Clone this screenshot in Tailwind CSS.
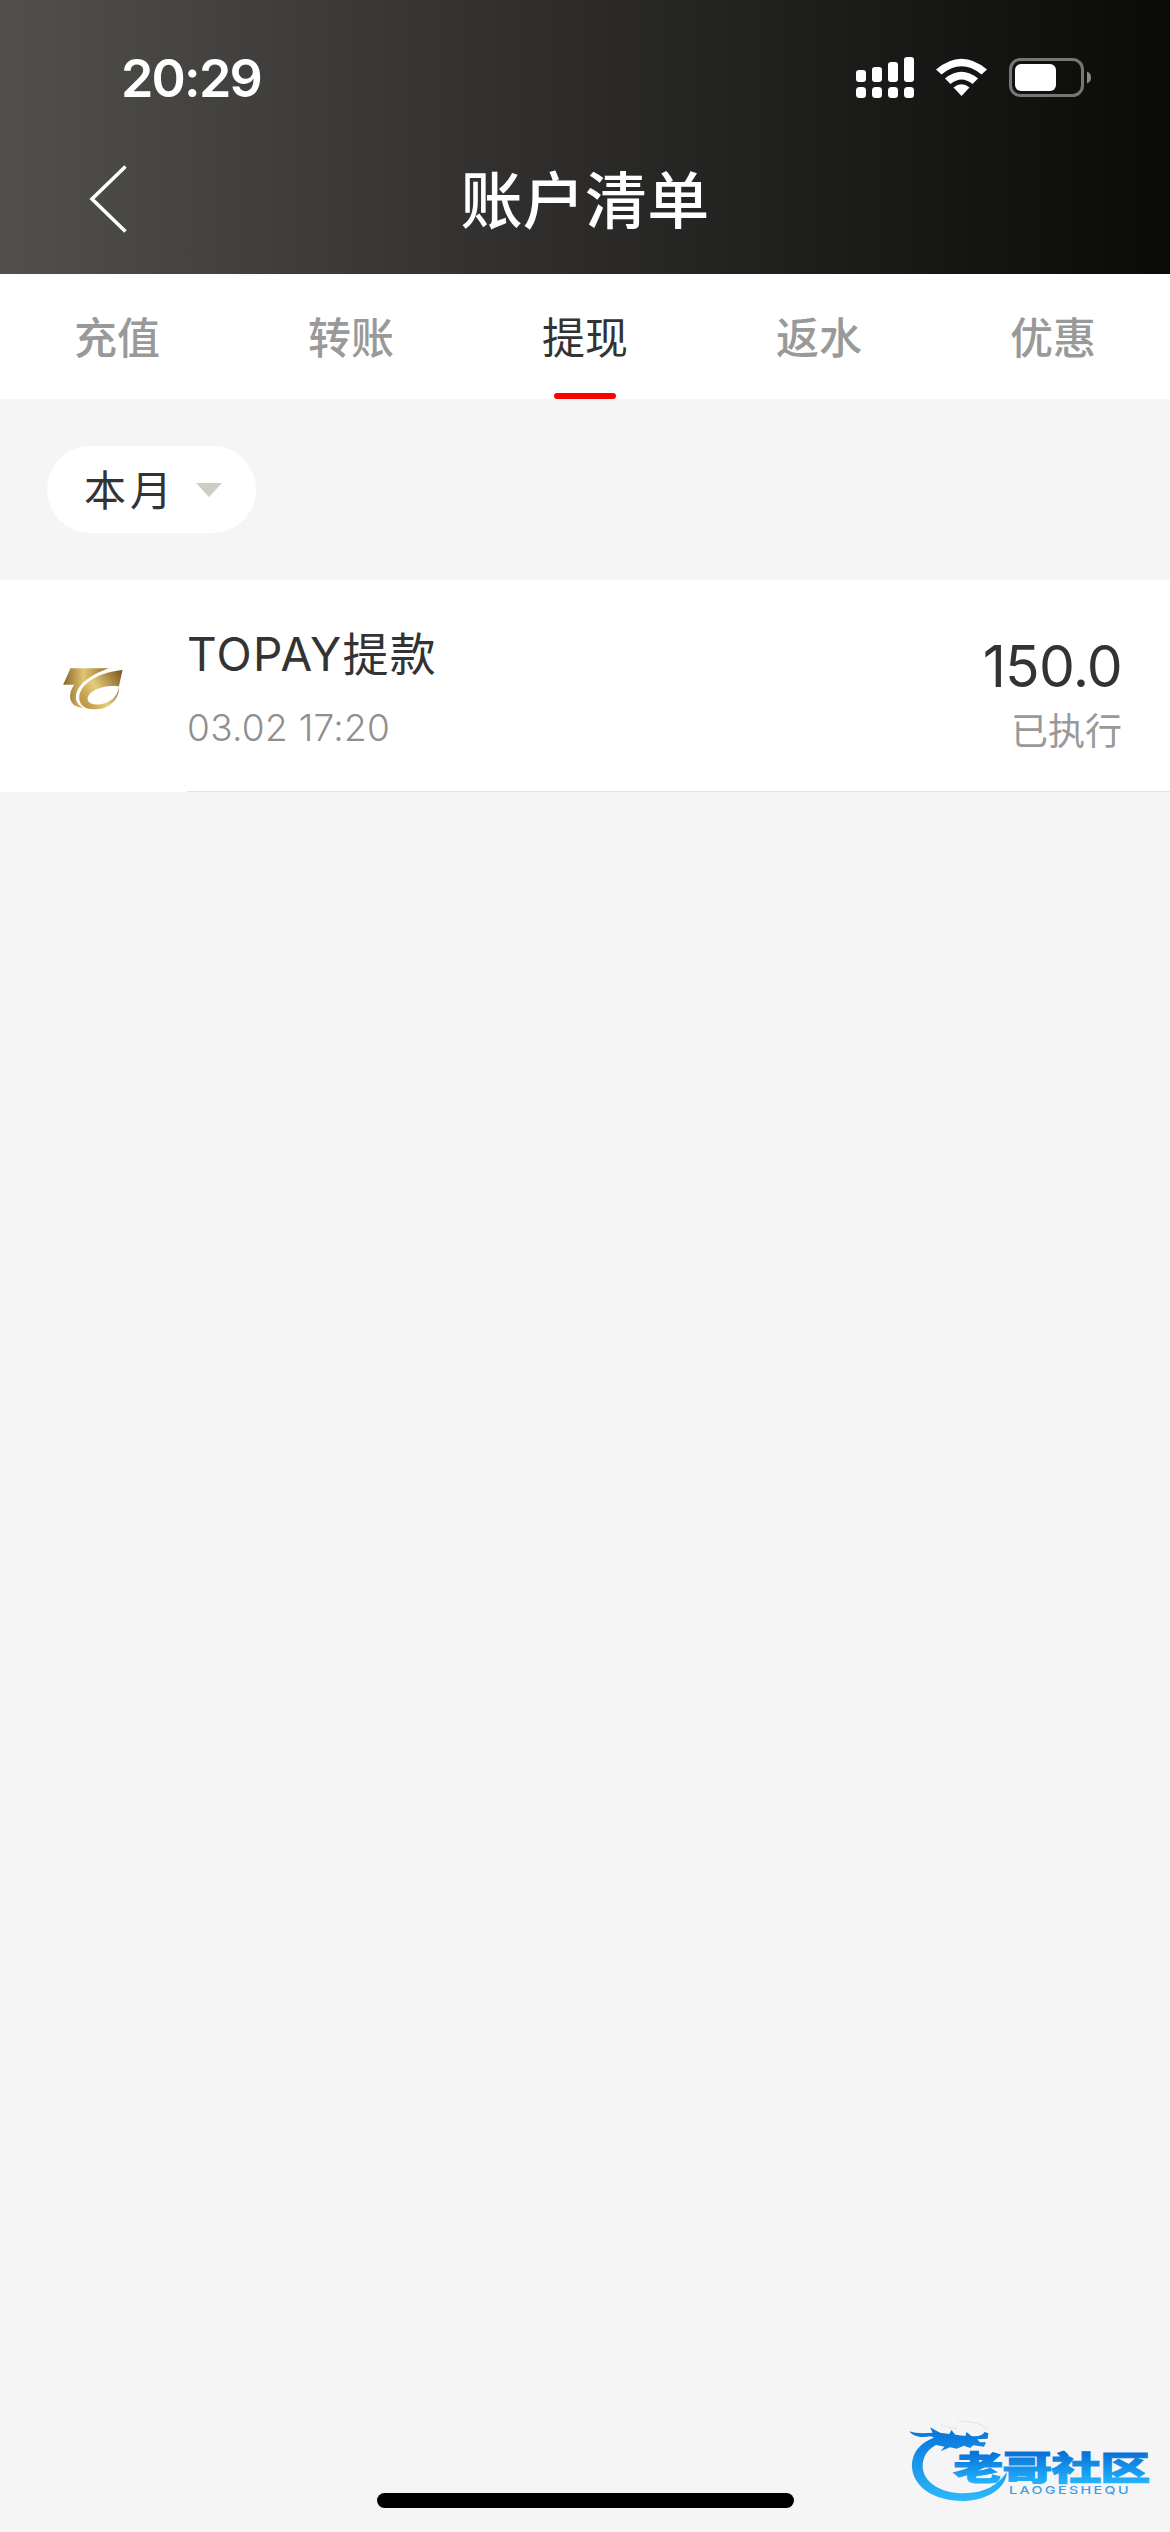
<!DOCTYPE html>
<html lang="zh-CN">
<head>
    <meta charset="UTF-8">
    <meta name="viewport" content="width=device-width, initial-scale=1.0">
    <title>账户清单</title>
    <script src="https://cdn.jsdelivr.net/npm/@tailwindcss/browser@4"></script>
</head>
<body class="bg-[#f5f5f5] font-['Inter','Noto_Sans_CJK_SC',sans-serif]">
    <div class="relative flex flex-col w-[1170px] h-[2532px] overflow-hidden">
        <header class="h-[274px] bg-linear-to-r from-[#51504d] via-[#2c2b2a] to-[#0a0a08] text-white">
            <!-- Status bar -->
            <div class="flex justify-between items-center h-[156px] pl-[121px] pr-[78px]">
                <span class="text-[52px] leading-none font-semibold tracking-[-1.8px] mt-0.5">20:29</span>
                <svg class="w-[236px] h-[42px]" viewBox="856 57 236 42" fill="#fff">
                    <rect x="856" y="70" width="10" height="12" rx="3" />
                    <rect x="872" y="67" width="10" height="15" rx="3" />
                    <rect x="888" y="62" width="10" height="20" rx="3" />
                    <rect x="904" y="57" width="10" height="25" rx="3" />
                    <rect x="856" y="87" width="10" height="11" rx="3.5" />
                    <rect x="872" y="87" width="10" height="11" rx="3.5" />
                    <rect x="888" y="87" width="10" height="11" rx="3.5" />
                    <rect x="904" y="87" width="10" height="11" rx="3.5" />
                    <path d="M936 69.500Q961.500 48 987 69.500L981.500 74.500Q961.500 58 941.500 74.500Z" />
                    <path d="M945 78.500Q961.500 65 978 78.500L972.500 84Q961.500 75 950.500 84Z" />
                    <path d="M953.500 87.500Q961.500 81 969.500 87.500L961.500 96Z" />
                    <rect x="1010.500" y="59.500" width="72" height="36" rx="10" fill="none" stroke="#767675" stroke-width="3" />
                    <rect x="1015" y="64" width="41" height="27" rx="6" />
                    <path d="M1087 71.500Q1091 73 1091 77.500T1087 83.500Z" fill="#8a8a89" />
                </svg>
            </div>
            <div class="grid grid-cols-[1fr_auto_1fr] items-center h-[92px]">
                <svg class="w-[38px] h-[68px] ml-[89px] mb-[6px]" viewBox="0 0 38 68" fill="none" stroke="#fff" stroke-width="3.600">
                    <path d="M36.500 1.500L3 34L36.500 66.500" />
                </svg>
                <h1 class="text-[62px] leading-none font-medium tracking-[0.3px]">账户清单</h1>
            </div>
        </header>

        <nav class="grid grid-cols-5 h-[125px] bg-white text-[43px] leading-[129px] text-center font-medium text-[#999]">
            <a>充值</a>
            <a>转账</a>
            <a class="relative font-normal text-[#333]">提现<i class="absolute top-[119px] left-[86px] w-[62px] h-[6px] rounded-[3px] bg-[#f00]"></i></a>
            <a>返水</a>
            <a>优惠</a>
        </nav>

        <div class="flex items-center h-[181px] pl-[47px]">
            <button class="flex items-center w-[209px] h-[87px] pl-[37px] rounded-full bg-white text-[42px] leading-none tracking-[4px] text-[#333]">
                <span class="mt-[3px]">本月</span>
                <svg class="w-[26px] h-[14px] ml-[20px]" viewBox="0 0 26 14"><path d="M0 0H26L13 14Z" fill="#cfccc5" /></svg>
            </button>
        </div>

        <!-- Record -->
        <section class="flex h-[212px] bg-white">
            <div class="w-[187px] pt-[87px] pl-[62px]">
                <svg class="w-[62px] h-[43px]" viewBox="187 290 182 128">
                    <defs>
                        <linearGradient id="gold" x1="0" x2="1">
                            <stop offset="0" stop-color="#8a6429" />
                            <stop offset=".45" stop-color="#e0c572" />
                            <stop offset="1" stop-color="#8f6a2c" />
                        </linearGradient>
                        <linearGradient id="ring" x1="0" x2="1" y1=".6" y2="0">
                            <stop offset="0" stop-color="#c29a48" />
                            <stop offset=".35" stop-color="#e6cd7c" />
                            <stop offset="1" stop-color="#77511b" />
                        </linearGradient>
                    </defs>
                    <path d="M211 294H325C280 309 230 340 227 378C226 392 235 405 250 412C223 410 208 396 210 374C211 361 216 352 222 343H189Z" fill="url(#gold)" />
                    <path fill-rule="evenodd" d="M366 299L355 348C358 383 330 416 282 416C252 416 236 401 237 380C240 336 300 305 366 299ZM355 348C315 341 262 360 262 386C263 399 282 404 302 401C332 395 352 376 355 348Z" fill="url(#ring)" />
                </svg>
            </div>
            <div class="flex flex-1 justify-between pr-[48px] border-b border-[#e4e4e4]">
                <div class="pt-[49px]">
                    <h2 class="text-[46px] leading-[50px] tracking-[1.3px] text-[#333]">TOPAY提款</h2>
                    <p class="mt-[24px] text-[37px] leading-[50px] font-light tracking-[0.3px] text-[#8f8f8f]">03.02 17:20</p>
                </div>
                <div class="pt-[57px] text-right">
                    <p class="text-[57px] leading-[60px] tracking-[-0.8px] text-[#333]">150.0</p>
                    <p class="mt-[10px] text-[37px] leading-[50px] text-[#999]">已执行</p>
                </div>
            </div>
        </section>

        <!-- Home indicator -->
        <div class="mt-auto mb-[24px] mx-auto w-[417px] h-[15px] rounded-full bg-black"></div>

        <!-- Community watermark -->
        <svg class="absolute right-0 bottom-0 w-[280px] h-[122px]" viewBox="0 0 840 366">
            <defs>
                <linearGradient id="blue" gradientUnits="userSpaceOnUse" x1="0" y1="50" x2="0" y2="270">
                    <stop offset="0" stop-color="#0872d8" />
                    <stop offset="1" stop-color="#2cb8fb" />
                </linearGradient>
                <linearGradient id="word" x1="0" y1="0" x2="0" y2="1">
                    <stop offset=".25" stop-color="#0872d8" />
                    <stop offset=".85" stop-color="#22b0fb" />
                </linearGradient>
            </defs>
            <path d="M150 78C90 92 64 130 66 172C70 230 130 274 222 273C290 271 350 235 350 186C325 225 285 249 222 250C150 250 98 215 98 168C98 130 125 104 165 96Z" fill="url(#blue)" />
            <path d="M58 64C85 72 105 69 128 68L120 52L150 68L178 72L184 60L196 74L226 78L230 66L244 78C262 80 277 78 284 66L295 70L293 86L262 88L270 97L288 97L282 110L250 106L240 114L222 107L200 116L180 112L152 124L163 110L135 104C143 94 137 82 120 79C98 84 72 82 58 64Z" fill="url(#blue)" />
            <path d="M148 40Q165 54 200 55M205 34Q275 33 291 60" fill="none" stroke="#d5e8f7" stroke-width="3" />
            <text transform="translate(190 209) scale(1.5 1)" font-family="Noto Sans CJK SC, sans-serif" font-weight="900" font-size="100" textLength="394" fill="url(#word)" stroke="url(#word)" stroke-width="3">老哥社区</text>
            <text transform="translate(357 252) scale(1.3 1)" font-family="Inter, sans-serif" font-weight="500" font-size="33" textLength="276" fill="#3a9fe8">LAOGESHEQU</text>
        </svg>
    </div>
</body>
</html>
